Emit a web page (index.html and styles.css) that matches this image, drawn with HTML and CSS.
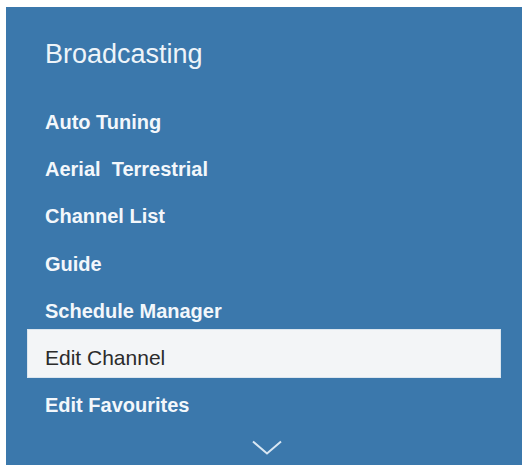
FILE: index.html
```html
<!DOCTYPE html>
<html lang="en">
<head>
<meta charset="utf-8">
<title>Broadcasting</title>
<link rel="stylesheet" href="styles.css">
</head>
<body>
<div class="panel">
  <div class="title">Broadcasting</div>
  <ul class="menu">
    <li class="item">Auto Tuning</li>
    <li class="item">Aerial&nbsp; Terrestrial</li>
    <li class="item">Channel List</li>
    <li class="item">Guide</li>
    <li class="item">Schedule Manager</li>
    <li class="item selected">Edit Channel</li>
    <li class="item">Edit Favourites</li>
  </ul>
  <div class="more">
    <svg class="chev" width="30" height="15" viewBox="0 0 30 15"><polyline points="1,1.5 15,13.5 29,1.5" fill="none" stroke="#d9e7f3" stroke-width="2"/></svg>
  </div>
</div>
</body>
</html>
```
FILE: styles.css
```css
html, body {
  margin: 0;
  padding: 0;
  background: #ffffff;
}
body {
  width: 523px;
  height: 468px;
  overflow: hidden;
  font-family: "Liberation Sans", Arial, sans-serif;
}
.panel {
  margin: 7px 1px 0 6px;
  height: 458px;
  box-sizing: border-box;
  background: #3b78ac;
  padding: 31px 22px 0 22px;
  display: flex;
  flex-direction: column;
}
.title {
  color: #eef4f9;
  font-size: 27px;
  line-height: 32px;
  padding-left: 17px;
  margin-bottom: 24px;
}
.menu {
  list-style: none;
  margin: 0;
  padding: 0;
}
.item {
  height: 47.2px;
  box-sizing: border-box;
  padding: 9px 0 0 17px;
  line-height: 38px;
  font-size: 20px;
  font-weight: bold;
  color: #f3f7fb;
}
.item.selected {
  background: #f3f5f7;
  color: #2b2b2b;
  font-weight: normal;
  font-size: 21px;
  height: 47px;
  box-shadow: 0 0 0 1px #dbe6ef;
}
.more {
  display: flex;
  justify-content: center;
  padding-left: 6px;
  padding-top: 16px;
}
.chev {
  display: block;
}
```
